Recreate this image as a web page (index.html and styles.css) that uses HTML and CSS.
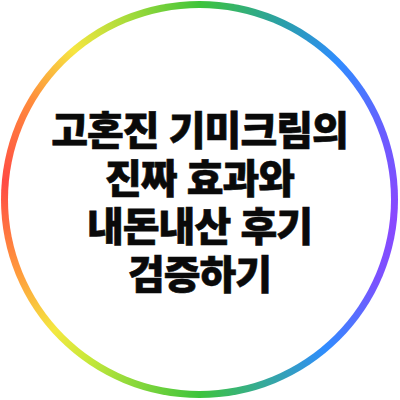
FILE: index.html
```html
<!DOCTYPE html>
<html lang="ko">
<head>
<meta charset="utf-8">
<link rel="stylesheet" href="styles.css">
</head>
<body>
<div class="page">
  <div class="ring">
    <div class="disc">
      <h1 class="title">고혼진 기미크림의<br>진짜 효과와<br>내돈내산 후기<br>검증하기</h1>
    </div>
  </div>
</div>
</body>
</html>
```

FILE: styles.css
```css
html, body {
  margin: 0;
  padding: 0;
  background: #ffffff;
}
.page {
  width: 400px;
  height: 400px;
  display: flex;
  align-items: flex-start;
  justify-content: flex-start;
  padding: 1px 0 0 1px;
  box-sizing: border-box;
}
.ring {
  width: 397px;
  height: 397px;
  border-radius: 50%;
  padding: 7px;
  box-sizing: border-box;
  background: conic-gradient(
    #3ec43a 0deg,
    #2a9fa8 25deg,
    #2f8cff 45deg,
    #6a5cff 70deg,
    #8a48ff 95deg,
    #7a52ff 115deg,
    #2f8cff 140deg,
    #3cc43c 180deg,
    #c8e83a 215deg,
    #f4e840 228deg,
    #ff9a3c 248deg,
    #ff4a44 275deg,
    #ff8a3c 300deg,
    #f6e640 320deg,
    #a8dc3a 338deg,
    #3ec43a 360deg
  );
}
.disc {
  width: 100%;
  height: 100%;
  border-radius: 50%;
  background: #ffffff;
  display: flex;
  align-items: center;
  justify-content: center;
}
.title {
  margin: 0;
  font-family: "Noto Sans CJK KR", "Noto Sans", sans-serif;
  font-weight: 900;
  font-size: 40px;
  line-height: 48px;
  letter-spacing: -1px;
  color: #0a0a0a;
  text-align: center;
  -webkit-text-stroke: 0.6px #0a0a0a;
}
```
